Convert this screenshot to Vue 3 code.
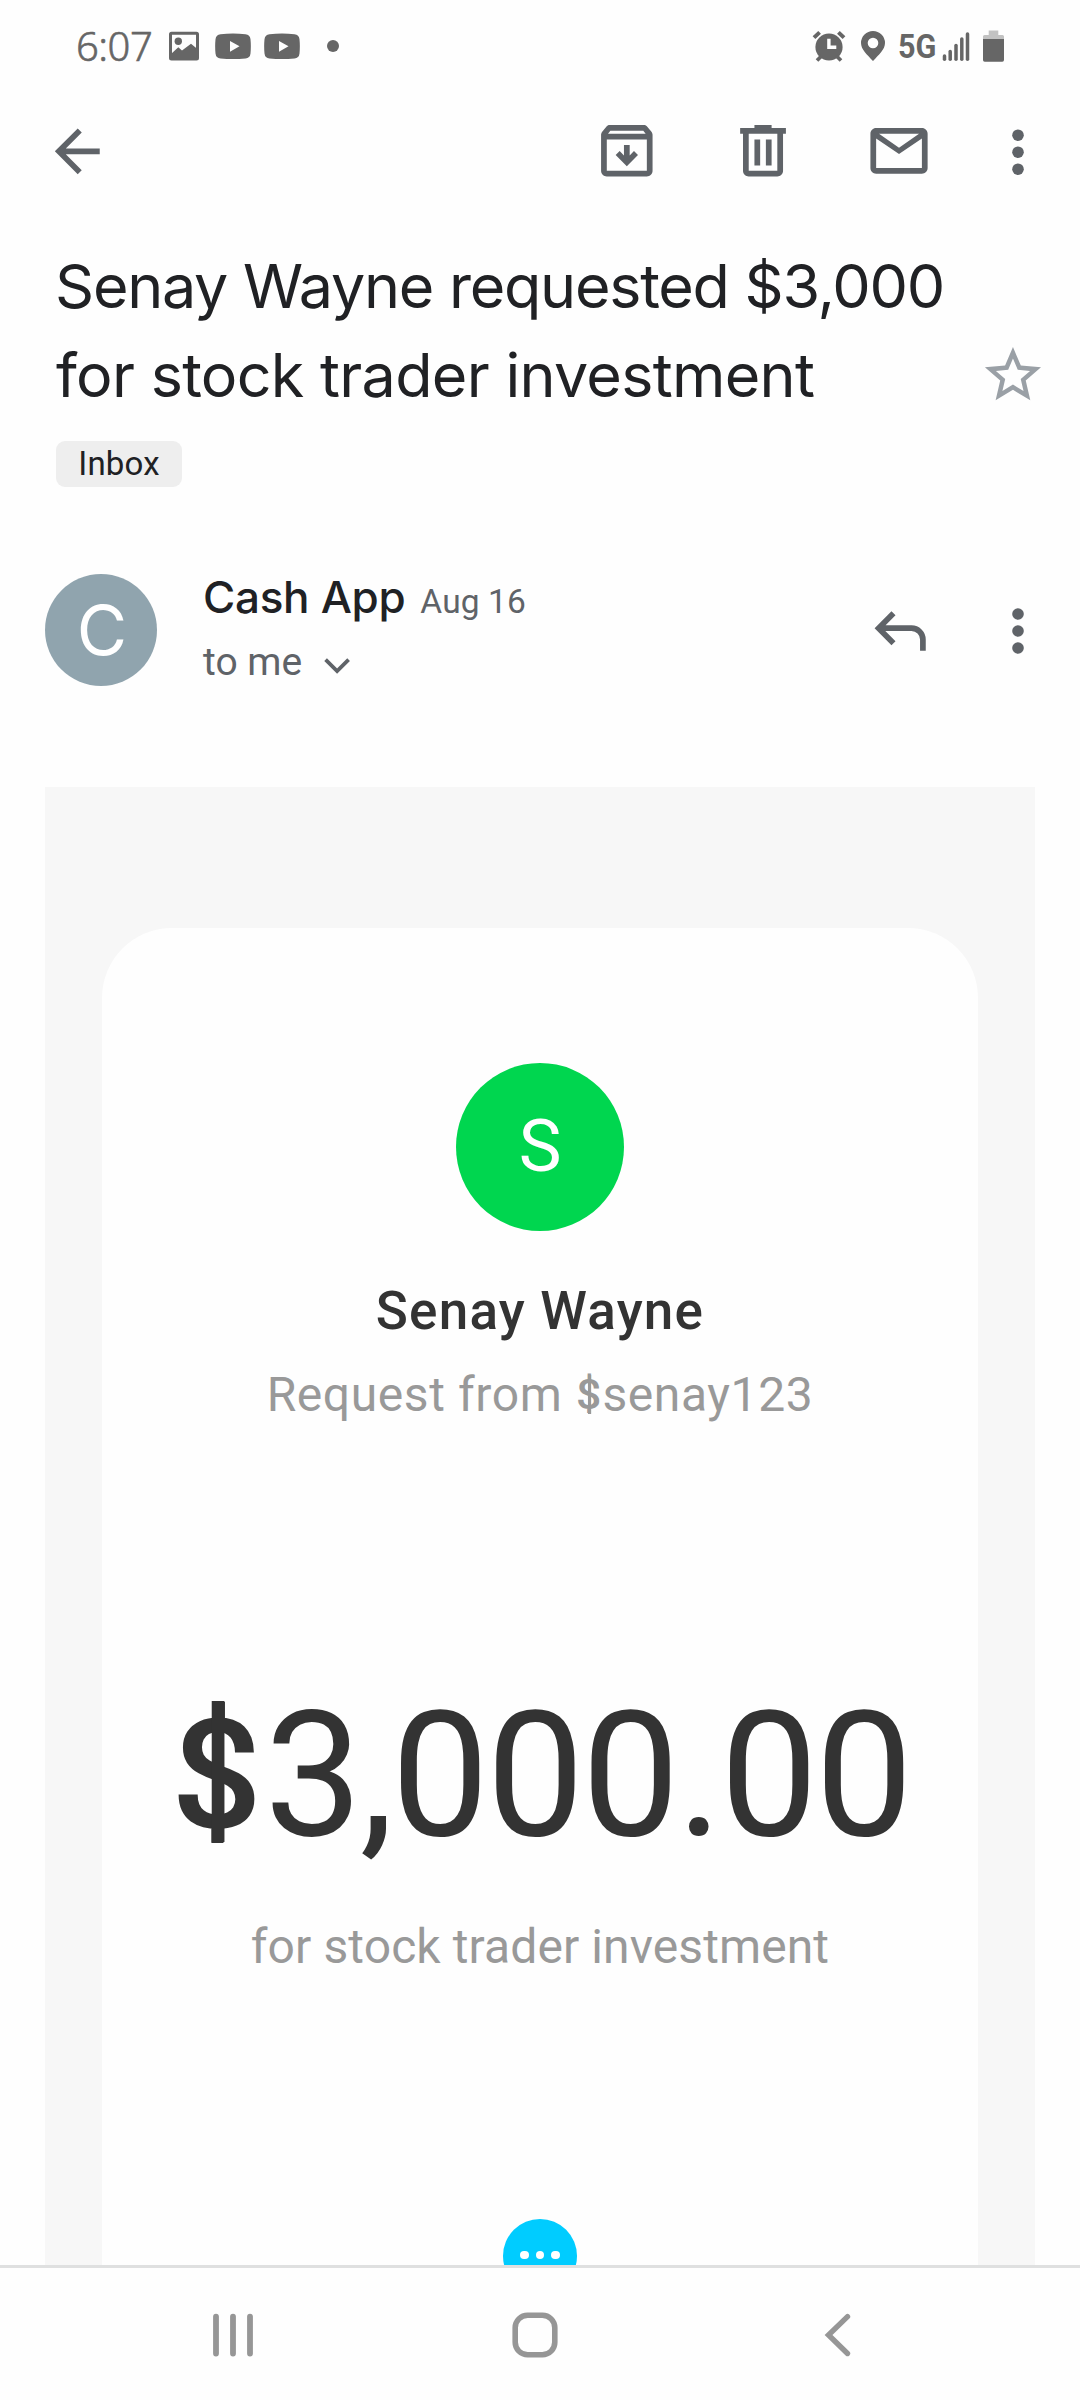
<script setup>
const signalBars = [
  { x: 944.5, top: 56 },
  { x: 950.2, top: 51.4 },
  { x: 956, top: 45.4 },
  { x: 961.8, top: 39 },
  { x: 967.5, top: 34 },
]
const dotRows = [135, 152, 169]
const mailDotRows = [614, 631, 648]
</script>

<template>
  <div class="screen">
    <header class="status">
      <span class="clock">6:07</span>
      <svg class="ic-photo" width="30" height="92" viewBox="169 0 30 92">
        <rect x="170.5" y="33.3" width="27" height="25.6" rx="1" fill="none" stroke="#666" stroke-width="3" />
        <circle cx="178.3" cy="41.2" r="3.7" fill="#666" />
        <path d="M171 54l7.3-6.7 3.7 3.2 9-6.8 7 5.8v10h-27z" fill="#666" />
      </svg>
      <svg v-for="n in 2" :key="n" class="ic-video" width="36" height="92" viewBox="215 0 36 92">
        <path d="M220.5 34.2q12.500-1.400 25 0q4.500.4 5 5q.7 7 0 14.200q-.5 4.600-5 5q-12.500 1.400-25 0q-4.500-.4-5-5q-.7-7.200 0-14.200q.5-4.600 5-5z" fill="#666" />
        <path d="M230 41l9.500 5.300-9.500 5.400z" fill="#fff" />
      </svg>
      <span class="more-dot"></span>
      <div class="status-right">
        <svg width="34" height="92" viewBox="812 0 34 92">
          <circle cx="829" cy="47" r="13.600" fill="#666" />
          <path d="M814 37.600l5.600-5.200M838.400 32.400l5.600 5.200" stroke="#666" stroke-width="4" />
          <path d="M821.500 56l-4.500 4.600M836.500 56l4.500 4.600" stroke="#666" stroke-width="3.600" />
          <path d="M828.900 38.700v8.600h7.400" fill="none" stroke="#fff" stroke-width="3.400" />
        </svg>
        <svg class="ic-pin" width="24" height="92" viewBox="861 0 24 92">
          <path fill-rule="evenodd" fill="#666" d="M873 31a12 12 0 0 0-12 12c0 6.500 6 11.500 12 18 6-6.500 12-11.500 12-18a12 12 0 0 0-12-12zm0 6.700a5.300 5.300 0 1 1 0 10.600 5.300 5.300 0 0 1 0-10.600z" />
        </svg>
        <span class="net">5G</span>
        <svg class="ic-signal" width="28" height="92" viewBox="942 0 28 92">
          <path v-for="b in signalBars" :key="b.x" :d="`M${b.x} ${b.top}V59.300`" stroke="#666" stroke-width="3.500" stroke-linecap="round" />
        </svg>
        <svg class="ic-battery" width="21" height="92" viewBox="983 0 21 92">
          <path d="M988.700 30.500h9.600V35h4.200q1.500 0 1.500 1.500V40h-21v-3.500q0-1.500 1.500-1.500h4.200z" fill="#c2c2c2" />
          <path d="M983 39h21v21q0 1.700-1.700 1.700h-17.600q-1.700 0-1.700-1.700z" fill="#666" />
        </svg>
      </div>
    </header>

    <nav class="toolbar">
      <svg class="back" width="48" height="120" viewBox="52 92 48 120">
        <path transform="translate(43.400 117) scale(2.860)" d="M19.700 11H7.830l5.590-5.590L12 4l-8 8 8 8 1.410-1.410L7.830 13H19.700z" />
      </svg>
      <svg width="52" height="120" viewBox="601 92 52 120">
        <path transform="translate(592.500 116.500) scale(2.860)" d="M20.540 5.230l-1.390-1.680C18.880 3.210 18.470 3 18 3H6c-.47 0-.88.21-1.160.55L3.460 5.230C3.170 5.570 3 6.020 3 6.500V19c0 1.100.9 2 2 2h14c1.100 0 2-.9 2-2V6.500c0-.48-.17-.93-.46-1.270zM6.240 5h11.520l.83 1H5.420l.82-1zM5 19V8h14v11H5zM11 10h2v3.600l1.500-1.500 1.400 1.400-3.900 3.900-3.900-3.900 1.400-1.400 1.500 1.500z" fill-rule="evenodd" />
      </svg>
      <svg class="trash" width="46" height="120" viewBox="740 92 46 120">
        <path transform="translate(728.700 116.500) scale(2.860)" fill-rule="evenodd" d="M9 3h6v1h5v2h-1v13c0 1.100-.9 2-2 2H7c-1.100 0-2-.9-2-2V6H4V4h5zM7 6v13h10V6zM9 8h2v9.100H9zM13 8h2v9.100h-2z" />
      </svg>
      <svg class="mail" width="58" height="120" viewBox="870 92 58 120">
        <path transform="translate(864.700 116.500) scale(2.860)" fill-rule="evenodd" d="M22 6c0-1.100-.9-2-2-2H4c-1.100 0-2 .9-2 2v12c0 1.100.9 2 2 2h16c1.100 0 2-.9 2-2V6zM19 6l-7 4.900L5 6h14zM20 18H4V7.700l8 5.400 8-5.400z" />
      </svg>
      <svg class="dots" width="12" height="120" viewBox="1012 92 12 120">
        <circle v-for="y in dotRows" :key="y" cx="1018" :cy="y + 0.200" r="5.800" />
      </svg>
    </nav>

    <section class="subject">
      <h1><span class="line l1">Senay Wayne requested $3,000</span><span class="line l2">for stock trader investment</span></h1>
      <svg class="star" width="58" height="56" viewBox="984 346 58 56">
        <path transform="translate(979.300 341.400) scale(2.805)" fill="#9aa0a6" d="M22 9.240l-7.190-.62L12 2 9.190 8.630 2 9.240l5.460 4.730L5.820 21 12 17.270 18.180 21l-1.630-7.030L22 9.240zM12 15.400l-3.760 2.270 1-4.280-3.320-2.880 4.380-.38L12 6.100l1.710 4.040 4.380.38-3.320 2.880 1 4.280L12 15.400z" />
      </svg>
    </section>
    <span class="chip">Inbox</span>

    <section class="sender">
      <div class="avatar">C</div>
      <div class="who">
        <div class="from"><b>Cash App</b><time>Aug 16</time></div>
        <div class="to"><span>to me</span>
          <svg width="28" height="20" viewBox="323 655 28 20"><path d="M325.600 659.700l11.500 11.300 11.500-11.300" fill="none" stroke="#5f6368" stroke-width="3.800" /></svg>
        </div>
      </div>
      <svg class="reply" width="54" height="112" viewBox="873 574 54 112">
        <path d="M878.800 628.200H911.500A11.400 11.400 0 0 1 922.900 639.600V650.700M893.500 613.200l-14.900 15 14.900 15" fill="none" stroke="#5f6368" stroke-width="5.700" />
      </svg>
      <svg class="mail-dots" width="12" height="112" viewBox="1012 574 12 112">
        <circle v-for="y in mailDotRows" :key="y" cx="1018" :cy="y" r="5.800" fill="#5f6368" />
      </svg>
    </section>

    <main class="body">
      <article class="card">
        <div class="payee">S</div>
        <h2>Senay Wayne</h2>
        <p class="req">Request from <span class="cur">$</span>senay123</p>
        <div class="amount"><span class="cur">$</span>3,000.00</div>
        <p class="note">for stock trader investment</p>
        <div class="pending"><i></i><i></i><i></i></div>
      </article>
    </main>

    <footer class="nav">
      <svg class="recents" width="42" height="132" viewBox="212 2268 42 132">
        <path d="M216 2316.600v37M233 2316.600v37M250 2316.600v37" stroke-width="5.800" stroke-linecap="round" />
      </svg>
      <svg class="home" width="48" height="132" viewBox="511 2268 48 132">
        <rect x="515.200" y="2315.200" width="39.600" height="39.600" rx="12.500" stroke-width="5.600" />
      </svg>
      <svg class="prev" width="28" height="132" viewBox="824 2268 28 132">
        <path d="M847.500 2316.600L828.500 2335l19 18.500" stroke-width="5.400" stroke-linecap="round" />
      </svg>
    </footer>
  </div>
</template>

<style>
body {
  margin: 0;
  background: #fefefe;
}
</style>

<style scoped>
.screen {
  width: 1080px;
  height: 2400px;
  overflow: hidden;
  background: #fefefe;
  display: flex;
  flex-direction: column;
  font-family: Roboto, sans-serif;
}
svg { display: block; flex: none; }
.status { display: flex; height: 92px; flex: none; padding-left: 76px; box-sizing: border-box; }
.clock {
  width: 93px;
  font: 300 40px/92px "Noto Sans", sans-serif;
  letter-spacing: -0.5px;
  -webkit-text-stroke: 0.600px #666;
  color: #666;
  white-space: nowrap;
}
.ic-video { margin-left: 16px; }
.ic-video + .ic-video { margin-left: 13px; }
.more-dot { width: 12px; height: 12px; margin: 40px 0 0 27px; border-radius: 50%; background: #666; }
.status-right { display: flex; margin-left: auto; margin-right: 76px; }
.ic-pin { margin-left: 15px; }
.net {
  width: 45px;
  margin: 0 -1px 0 13px;
  font: 700 34px/92px Roboto, sans-serif;
  color: #666;
  transform: scaleX(0.9);
  transform-origin: 0 50%;
}
.ic-battery { margin-left: 13px; }

.toolbar { display: flex; height: 120px; flex: none; padding-left: 52px; fill: #5f6368; }
.back { margin-right: 501px; }
.trash { margin-left: 87px; }
.mail { margin-left: 84px; }
.dots { margin-left: 84px; }

.subject { display: flex; align-items: flex-end; margin-top: 30px; height: 178px; flex: none; padding-left: 55px; }
h1 { margin: 0; width: 929px; font: 400 61px/89px Inter, sans-serif; color: #202124; white-space: nowrap; }
.line { display: block; }
.l1 { letter-spacing: -1.250px; }
.l2 { padding-left: 1px; letter-spacing: -0.700px; }
.star { margin-bottom: 18px; }
.chip {
  flex: none;
  width: 126px;
  height: 46px;
  margin: 21px 0 0 56px;
  border-radius: 9px;
  background: #eee;
  text-align: center;
  font-size: 33px;
  line-height: 45px;
  letter-spacing: 0.2px;
  color: #202124;
}

.sender { display: flex; flex: none; height: 112px; margin: 87px 0 0 45px; }
.avatar {
  width: 112px;
  height: 112px;
  border-radius: 50%;
  background: #90a4ae;
  color: #fff;
  text-align: center;
  text-indent: 2px;
  font: 400 69px/113px Inter, sans-serif;
}
.who { width: 716px; padding-left: 46px; box-sizing: border-box; }
.from { display: flex; align-items: baseline; height: 56px; line-height: 46px; white-space: nowrap; }
.from b { font: 500 44px/46px Inter, sans-serif; letter-spacing: -0.300px; color: #202124; }
.from time { margin-left: 15px; font-size: 33.500px; letter-spacing: 0.100px; color: #5f6368; }
.to { display: flex; align-items: center; height: 62px; font-size: 39px; line-height: 62px; color: #5f6368; }
.to span { padding-top: 2px; }
.to svg { margin: 8px 0 0 21px; }
.mail-dots { margin-left: 85px; }

.body { flex: none; width: 990px; height: 1478px; margin: 101px 0 0 45px; padding: 141px 57px 0; box-sizing: border-box; background: #f7f7f7; overflow: hidden; }
.card {
  height: 1500px;
  border-radius: 70px;
  background: #fefefe;
  display: flex;
  flex-direction: column;
  align-items: center;
  white-space: nowrap;
}
.payee { width: 168px; height: 168px; margin-top: 135px; border-radius: 50%; background: #00d64f; color: #fff; text-align: center; font-size: 72px; line-height: 168px; }
h2 { margin: 50px 0 0; font-size: 53px; font-weight: 500; line-height: 60px; letter-spacing: 1.200px; color: #333; }
.req { margin: 24px 0 0; font-size: 48px; line-height: 60px; letter-spacing: 0.6px; color: #999; }
.cur { position: relative; display: inline-block; font-weight: 500; line-height: 1; letter-spacing: 0; text-align: center; transform: scaleX(1.06); }
/* vertical stem running through the whole dollar sign */
.cur::after {
  content: "";
  position: absolute;
  left: 50%;
  top: 0.012em;
  width: 0.076em;
  height: 0.932em;
  margin-left: -0.028em;
  background: currentColor;
}
.req .cur { width: 27.500px; font-size: 42px; vertical-align: 2px; }
.amount { margin-top: 251px; height: 200px; font-size: 174px; line-height: 200px; letter-spacing: -2.600px; color: #333; }
.amount .cur { width: 95px; font-size: 152px; vertical-align: 8px; }
.note { margin: 41px 0 0; font-size: 48px; line-height: 60px; letter-spacing: 0.100px; color: #999; }
.pending { display: flex; flex: none; justify-content: center; align-items: center; gap: 7px; width: 74px; height: 74px; margin-top: 242px; padding-bottom: 2px; box-sizing: border-box; border-radius: 50%; background: #0cf; }
.pending i { width: 8.500px; height: 8.500px; border-radius: 50%; background: #fff; }

.nav { display: flex; flex: none; height: 135px; box-sizing: border-box; border-top: 3px solid #dfe0e0; padding-left: 212px; background: #fefefe; fill: none; stroke: #969696; }
.home { margin-left: 257px; }
.prev { margin-left: 265px; }
</style>
